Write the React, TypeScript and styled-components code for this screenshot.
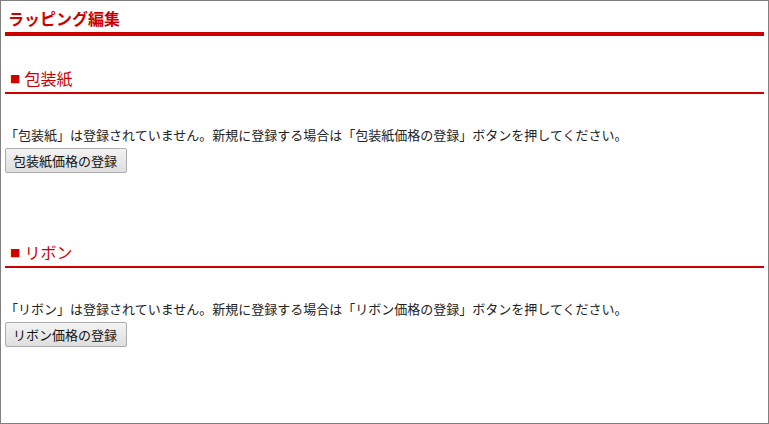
import React from "react";
import styled, { createGlobalStyle } from "styled-components";

const Global = createGlobalStyle`
  html, body { margin: 0; padding: 0; background: #fff; }
  body { font-family: "Noto Sans CJK JP", "Noto Sans", sans-serif; }
  * { box-sizing: border-box; }
`;

const Frame = styled.div`
  height: 424px;
  border: 1px solid #808080;
  padding: 0 4px 0 4px;
  background: #fff;
`;

const Title = styled.h1`
  margin: 0;
  padding: 6px 3px 3px;
  font-size: 16px;
  line-height: 22px;
  font-weight: bold;
  color: #cc0000;
  border-bottom: 4px solid #cc0000;
`;

const Section = styled.section<{ $top: number }>`
  margin-top: ${(p) => p.$top}px;
`;

const SectionHeading = styled.h2`
  margin: 0;
  padding: 0 0 2px 5px;
  font-size: 16px;
  line-height: 24px;
  font-weight: normal;
  color: #cc0000;
  border-bottom: 2px solid #cc0000;
  display: flex;
  align-items: center;
  gap: 4px;
`;

const Square = styled.span`
  font-family: "DejaVu Sans", sans-serif;
  font-size: 11px;
  line-height: 1;
  color: #cc0000;
`;

const Message = styled.p`
  margin: 32px 0 0;
  font-size: 13px;
  line-height: 18px;
  color: #222;
`;

const Button = styled.button`
  margin-top: 4px;
  height: 25px;
  padding: 0 9px 0 7px;
  font-family: "Noto Sans CJK JP", "Noto Sans", sans-serif;
  font-size: 13px;
  color: #111;
  background: linear-gradient(#f3f3f3, #dedede);
  border: 1px solid #acacac;
  border-radius: 2px;
  cursor: pointer;
`;

const sections = [
  { name: "包装紙", top: 30 },
  { name: "リボン", top: 67 },
];

export default function App() {
  return (
    <>
      <Global />
      <Frame>
        <Title>ラッピング編集</Title>
        {sections.map((s) => (
          <Section key={s.name} $top={s.top}>
            <SectionHeading>
              <Square>■</Square>
              <span>{s.name}</span>
            </SectionHeading>
            <Message>
              「{s.name}」は登録されていません。新規に登録する場合は「{s.name}価格の登録」ボタンを押してください。
            </Message>
            <Button>{s.name}価格の登録</Button>
          </Section>
        ))}
      </Frame>
    </>
  );
}
